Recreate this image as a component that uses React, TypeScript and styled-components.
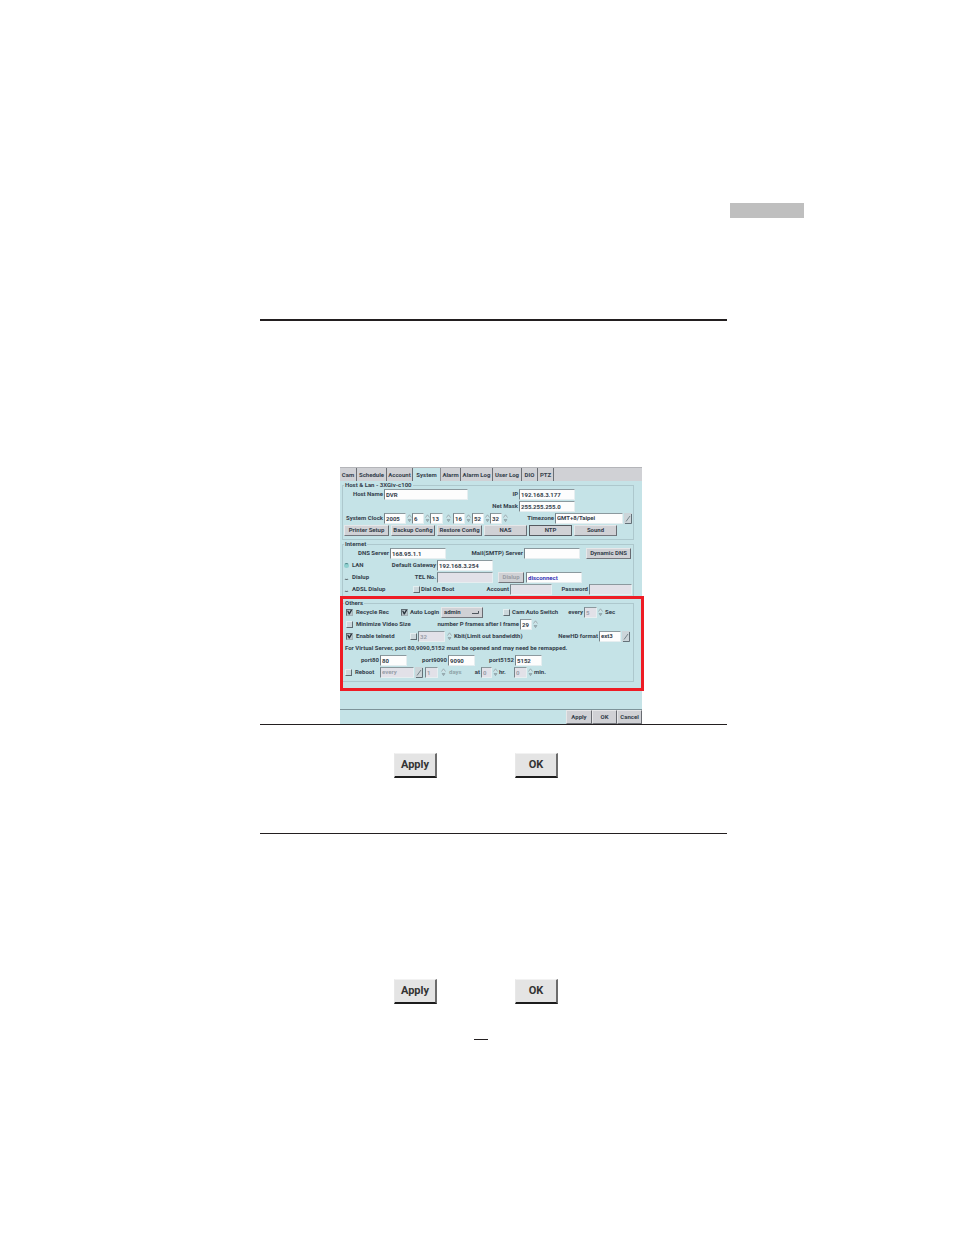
import React from "react";
import styled, { createGlobalStyle, css } from "styled-components";

const Global = createGlobalStyle`
  *, *::before, *::after { box-sizing: border-box; }
  body { margin: 0; background: #fff; }
  button, input, select { font: inherit; color: inherit; margin: 0; border-radius: 0; }
`;

const Page = styled.main`
  display: grid;
  grid-template-columns: 260fr 467fr 227fr;
  padding: 203px 0 195px;
  font-family: Roboto, "Liberation Sans", sans-serif;
`;

const Marker = styled.div`
  grid-column: 3;
  width: 74px;
  height: 15px;
  margin-left: 3px;
  background: #bfbfbf;
`;

const Column = styled.article`
  grid-column: 2;
  padding-top: 101px;
`;

const Rule = styled.hr<{ $thick?: boolean }>`
  height: ${(p) => (p.$thick ? 2 : 1)}px;
  margin: 0;
  border: 0;
  background: #231f20;
`;

const Figure = styled.figure`
  width: 302px;
  margin: 146px 0 0 80px;
`;

const Dialog = styled.form`
  display: flex;
  flex-direction: column;
  background: #c5e3e7;
  color: #34404b;
  font-size: 6px;
  font-weight: 700;
  line-height: 8px;
`;

const Tabs = styled.nav`
  display: flex;
  height: 14px;
  background: #d0d1d5;
  border-top: 1px solid #b4b5b9;
`;

const Tab = styled.button<{ $w: number; $active?: boolean }>`
  width: ${(p) => p.$w}px;
  padding: 1px 0 0;
  border: 0;
  border-right: 1px solid ${(p) => (p.$active ? "#8d9297" : "#6a6e74")};
  background: ${(p) => (p.$active ? "#c5e3e7" : "transparent")};
  text-align: center;
  white-space: nowrap;
`;

const Group = styled.fieldset`
  min-width: 0;
  margin: 1px 8px 0 2px;
  padding: 0 0 3px 1px;
  border: 1px solid #adc8cd;
`;

const Legend = styled.legend`
  height: 6px;
  padding: 0 1px;
  line-height: 6px;
`;

const Row = styled.div<{ $cols: string; $gap?: number }>`
  display: grid;
  grid-template-columns: ${(p) => p.$cols};
  column-gap: ${(p) => p.$gap ?? 0}px;
  align-items: center;
  height: 12px;
  white-space: nowrap;
`;

const Label = styled.label<{ $end?: boolean; $dim?: boolean }>`
  display: flex;
  justify-content: ${(p) => (p.$end ? "flex-end" : "flex-start")};
  min-width: 0;
  padding: 0 1px;
  color: ${(p) => (p.$dim ? "#8fa3a8" : "inherit")};
`;

const sunken = css`
  border: 1px solid;
  border-color: #8b999e #e6eef0 #e6eef0 #76848a;
`;

const Field = styled.input<{ $blue?: boolean }>`
  ${sunken}
  width: 100%;
  min-width: 0;
  height: 11px;
  padding: 0 1px;
  background: #fdfdfd;
  color: ${(p) => (p.$blue ? "#3434b4" : "inherit")};
  &:disabled {
    background: #e2e1e8;
    color: #999fa8;
  }
`;

const Choice = styled.select`
  ${sunken}
  appearance: none;
  width: 100%;
  height: 11px;
  padding: 0 1px;
  background: #fdfdfd;
  &:disabled {
    background: #e2e1e8;
    color: #999fa8;
    opacity: 1;
  }
`;

const raised = css`
  border: 1px solid;
  border-color: #e6e7e9 #686b71 #74777d #e6e7e9;
  background: #d0d1d5;
`;

const Menu = styled.select`
  ${raised}
  appearance: none;
  width: 100%;
  height: 11px;
  padding: 0 2px;
`;

const MenuBox = styled.span`
  display: grid;
  align-items: center;
  > * { grid-area: 1 / 1; }
  > svg { justify-self: end; margin-right: 4px; pointer-events: none; }
`;

const Push = styled.button`
  ${raised}
  width: 100%;
  height: 11px;
  padding: 0;
  text-align: center;
  white-space: nowrap;
  line-height: 8px;
  &:disabled { color: #9a9da5; }
`;

const PushFocus = styled(Push)`
  border-color: #565a60;
`;

const IconButton = styled.button`
  display: block;
  width: 100%;
  height: 11px;
  padding: 0;
  border: 0;
  background: transparent;
  > svg { display: block; margin: 0 auto; }
`;

const Tick = styled.input`
  appearance: none;
  display: grid;
  width: 7px;
  height: 7px;
  border: 1px solid;
  border-color: #e3eef0 #5f6b71 #5f6b71 #e3eef0;
  background: #ccd8dc;
  &:checked {
    border-color: #5f6b71 #a3b1b6 #a3b1b6 #5f6b71;
    background: #b9c6cb;
  }
  &:checked::after {
    content: "";
    background: #27323b;
    clip-path: polygon(0 25%, 28% 25%, 45% 58%, 80% 0, 100% 0, 100% 20%, 55% 100%, 35% 100%);
  }
`;

const Dot = styled.input`
  appearance: none;
  width: 5px;
  height: 5px;
  border: 1px solid;
  border-color: transparent transparent #5f6b71;
  border-radius: 3px;
  &:checked {
    border-color: #4d8a8c transparent transparent;
    background: #8fd0cf;
  }
`;

const Footer = styled.footer`
  display: grid;
  grid-template-columns: 1fr 26px 25px 25px;
  height: 15px;
  margin-top: 27px;
  border-top: 1px solid #7d9399;
`;

const FooterButton = styled.button`
  ${raised}
  padding: 0;
  text-align: center;
`;

const HighlightArea = styled.div`
  position: relative;
`;

const Highlight = styled.div`
  position: absolute;
  inset: -3px -2px -9px 0;
  border: 3px solid #ee1c25;
  pointer-events: none;
`;

const Actions = styled.div<{ $top: number; $bottom: number }>`
  display: flex;
  gap: 78px;
  padding: ${(p) => p.$top}px 0 ${(p) => p.$bottom}px 134px;
`;

const Action = styled.button`
  width: 43px;
  height: 25px;
  padding: 0;
  border: solid;
  border-width: 1px 2px 2px 1px;
  border-color: #f2f2f2 #6c6c6c #1c1c1c #e8e8e8;
  background: #e4e4e4;
  color: #333;
  font-size: 11px;
  font-weight: 700;
  line-height: 14px;
`;

const PageMark = styled.hr`
  width: 14px;
  height: 1px;
  margin: 0 0 0 214px;
  border: 0;
  background: #231f20;
`;

const Spin = ({ name }: { name: string }) => (
  <IconButton type="button" aria-label={name}>
    <svg width="5" height="9" viewBox="0 0 5 9">
      <path d="M.5 3.5 2.5.8l2 2.7" fill="#d4e4e8" stroke="#8b9a9f" strokeWidth=".7" />
      <path d="M1 5.5h3l-1.5 2.2z" fill="#a3b5ba" stroke="#7d8d93" strokeWidth=".5" />
    </svg>
  </IconButton>
);

const Drop = ({ name }: { name: string }) => (
  <IconButton type="button" aria-label={name}>
    <svg width="8" height="11" viewBox="0 0 8 11">
      <path d="M0 0h8v11H0z" fill="#ccd5d9" />
      <path d="M7.5 1v9.5H1" fill="none" stroke="#647178" />
      <path d="M2 8.5 6 3" fill="none" stroke="#77858b" />
    </svg>
  </IconButton>
);

const tabs: [string, number][] = [
  ["Cam", 17], ["Schedule", 30], ["Account", 26], ["System", 28], ["Alarm", 20],
  ["Alarm Log", 32], ["User Log", 29], ["DIO", 16], ["PTZ", 16],
];

const clock: [string, string][] = [
  ["Month", "6"], ["Day", "13"], ["Hour", "16"], ["Minute", "52"], ["Second", "32"],
];

export default function App() {
  return (
    <>
      <Global />
      <Page>
        <Marker />
        <Column>
          <Rule $thick />
          <Figure>
            <Dialog onSubmit={(e) => e.preventDefault()}>
              <Tabs>
                {tabs.map(([name, w]) => (
                  <Tab key={name} type="button" $w={w} $active={name === "System"}>{name}</Tab>
                ))}
              </Tabs>

              <Group>
                <Legend>Host &amp; Lan - 3XGiv-c100</Legend>
                <Row $cols="40px 84px 51px 56px">
                  <Label $end htmlFor="host">Host Name</Label>
                  <Field id="host" defaultValue="DVR" />
                  <Label $end htmlFor="ip">IP</Label>
                  <Field id="ip" defaultValue="192.168.3.177" />
                </Row>
                <Row $cols="175px 56px">
                  <Label $end htmlFor="mask">Net Mask</Label>
                  <Field id="mask" defaultValue="255.255.255.0" />
                </Row>
                <Row $cols="40px 22px 6px 12px 6px 13px 10px 12px 7px 12px 6px 12px 6px 47px 68px 9px">
                  <Label $end htmlFor="year">System Clock</Label>
                  <Field id="year" defaultValue="2005" />
                  <Spin name="Change year" />
                  {clock.map(([name, value]) => (
                    <React.Fragment key={name}>
                      <Field aria-label={name} defaultValue={value} />
                      <Spin name={`Change ${name.toLowerCase()}`} />
                    </React.Fragment>
                  ))}
                  <Label $end htmlFor="zone">Timezone</Label>
                  <Choice id="zone"><option>GMT+8/Taipei</option></Choice>
                  <Drop name="Open timezones" />
                </Row>
                <Row $cols="45px 44px 45px 43px 43px 43px" $gap={2}>
                  <Push type="button">Printer Setup</Push>
                  <Push type="button">Backup Config</Push>
                  <Push type="button">Restore Config</Push>
                  <Push type="button">NAS</Push>
                  <PushFocus type="button">NTP</PushFocus>
                  <Push type="button">Sound</Push>
                </Row>
              </Group>

              <Group>
                <Legend>Internet</Legend>
                <Row $cols="46px 56px 78px 56px 6px 45px">
                  <Label $end htmlFor="dns">DNS Server</Label>
                  <Field id="dns" defaultValue="168.95.1.1" />
                  <Label $end htmlFor="smtp">Mail(SMTP) Server</Label>
                  <Field id="smtp" />
                  <span />
                  <Push type="button">Dynamic DNS</Push>
                </Row>
                <Row $cols="7px 34px 52px 56px">
                  <Dot type="radio" name="link" id="lan" defaultChecked />
                  <Label htmlFor="lan">LAN</Label>
                  <Label $end htmlFor="gateway">Default Gateway</Label>
                  <Field id="gateway" defaultValue="192.168.3.254" />
                </Row>
                <Row $cols="7px 34px 52px 56px 5px 26px 2px 56px">
                  <Dot type="radio" name="link" id="dialup" />
                  <Label htmlFor="dialup">Dialup</Label>
                  <Label $end htmlFor="tel">TEL No.</Label>
                  <Field id="tel" disabled />
                  <span />
                  <Push type="button" disabled>Dialup</Push>
                  <span />
                  <Field aria-label="Dial status" $blue defaultValue="disconnect" />
                </Row>
                <Row $cols="7px 62px 7px 50px 40px 42px 37px 43px">
                  <Dot type="radio" name="link" id="adsl" />
                  <Label htmlFor="adsl">ADSL Dialup</Label>
                  <Tick type="checkbox" id="boot" />
                  <Label htmlFor="boot">Dial On Boot</Label>
                  <Label $end htmlFor="account">Account</Label>
                  <Field id="account" disabled />
                  <Label $end htmlFor="password">Password</Label>
                  <Field id="password" disabled />
                </Row>
              </Group>

              <HighlightArea>
                <Group>
                  <Legend>Others</Legend>
                  <Row $cols="2px 9px 46px 8px 32px 42px 20px 8px 51px 22px 13px 7px 20px">
                    <span />
                    <Tick type="checkbox" id="recycle" defaultChecked />
                    <Label htmlFor="recycle">Recycle Rec</Label>
                    <Tick type="checkbox" id="auto" defaultChecked />
                    <Label htmlFor="auto">Auto Login</Label>
                    <MenuBox>
                      <Menu aria-label="Login user"><option>admin</option></Menu>
                      <svg width="7" height="3" viewBox="0 0 7 3">
                        <path d="M0 2.5h6.5V0" fill="none" stroke="#4f565d" />
                      </svg>
                    </MenuBox>
                    <span />
                    <Tick type="checkbox" id="switch" />
                    <Label htmlFor="switch">Cam Auto Switch</Label>
                    <Label $end htmlFor="seconds">every</Label>
                    <Field id="seconds" disabled defaultValue="5" />
                    <Spin name="Change seconds" />
                    <Label as="span">Sec</Label>
                  </Row>
                  <Row $cols="2px 9px 60px 105px 12px 7px">
                    <span />
                    <Tick type="checkbox" id="minimize" />
                    <Label htmlFor="minimize">Minimize Video Size</Label>
                    <Label $end htmlFor="frames">number P frames after I frame</Label>
                    <Field id="frames" defaultValue="29" />
                    <Spin name="Change frame count" />
                  </Row>
                  <Row $cols="2px 9px 55px 8px 27px 8px 74px 72px 22px 9px">
                    <span />
                    <Tick type="checkbox" id="telnet" defaultChecked />
                    <Label htmlFor="telnet">Enable telnetd</Label>
                    <Tick type="checkbox" aria-label="Limit bandwidth" />
                    <Field id="kbit" disabled defaultValue="32" />
                    <Spin name="Change bandwidth" />
                    <Label htmlFor="kbit">Kbit(Limit out bandwidth)</Label>
                    <Label $end htmlFor="format">NewHD format</Label>
                    <Choice id="format"><option>ext3</option></Choice>
                    <Drop name="Open formats" />
                  </Row>
                  <Row $cols="1fr">
                    <Label as="span">For Virtual Server, port 80,9090,5152 must be opened and may need be remapped.</Label>
                  </Row>
                  <Row $cols="36px 27px 41px 27px 40px 27px">
                    <Label $end htmlFor="p80">port80</Label>
                    <Field id="p80" defaultValue="80" />
                    <Label $end htmlFor="p9090">port9090</Label>
                    <Field id="p9090" defaultValue="9090" />
                    <Label $end htmlFor="p5152">port5152</Label>
                    <Field id="p5152" defaultValue="5152" />
                  </Row>
                  <Row $cols="1px 9px 26px 34px 9px 2px 13px 10px 16px 17px 11px 6px 16px 13px 6px 16px">
                    <span />
                    <Tick type="checkbox" id="reboot" />
                    <Label htmlFor="reboot">Reboot</Label>
                    <Choice aria-label="Reboot period" disabled><option>every</option></Choice>
                    <Drop name="Open periods" />
                    <span />
                    <Field id="days" disabled defaultValue="1" />
                    <Spin name="Change days" />
                    <Label $dim htmlFor="days">days</Label>
                    <Label $end htmlFor="hour">at</Label>
                    <Field id="hour" disabled defaultValue="0" />
                    <Spin name="Change reboot hour" />
                    <Label htmlFor="hour">hr.</Label>
                    <Field id="minute" disabled defaultValue="0" />
                    <Spin name="Change reboot minute" />
                    <Label htmlFor="minute">min.</Label>
                  </Row>
                </Group>
                <Highlight />
              </HighlightArea>

              <Footer>
                <span />
                <FooterButton>Apply</FooterButton>
                <FooterButton type="button">OK</FooterButton>
                <FooterButton type="button">Cancel</FooterButton>
              </Footer>
            </Dialog>
          </Figure>
          <Rule />
          <Actions $top={28} $bottom={55}>
            <Action type="button">Apply</Action>
            <Action type="button">OK</Action>
          </Actions>
          <Rule />
          <Actions $top={145} $bottom={35}>
            <Action type="button">Apply</Action>
            <Action type="button">OK</Action>
          </Actions>
          <PageMark />
        </Column>
      </Page>
    </>
  );
}
